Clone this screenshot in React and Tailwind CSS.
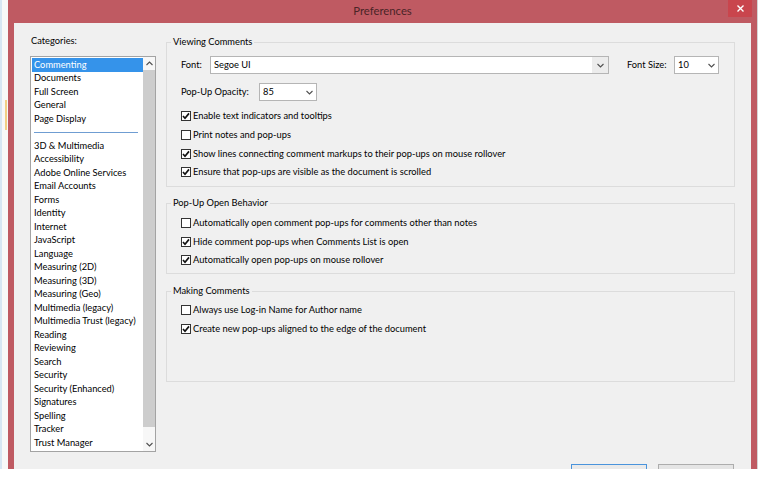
import React from "react";

const topCategories = ["Commenting", "Documents", "Full Screen", "General", "Page Display"];
const moreCategories = [
  "3D & Multimedia",
  "Accessibility",
  "Adobe Online Services",
  "Email Accounts",
  "Forms",
  "Identity",
  "Internet",
  "JavaScript",
  "Language",
  "Measuring (2D)",
  "Measuring (3D)",
  "Measuring (Geo)",
  "Multimedia (legacy)",
  "Multimedia Trust (legacy)",
  "Reading",
  "Reviewing",
  "Search",
  "Security",
  "Security (Enhanced)",
  "Signatures",
  "Spelling",
  "Tracker",
  "Trust Manager",
  "Updater",
];

const Chevron = ({ up }) => (
  <svg width="7" height="5" viewBox="0 0 7 5" className="shrink-0">
    <polyline
      points={up ? "0.5,4 3.5,1 6.5,4" : "0.5,1 3.5,4 6.5,1"}
      fill="none"
      stroke="#505050"
      strokeWidth="1.1"
    />
  </svg>
);

const CheckBox = ({ checked }) => (
  <svg width="10" height="10" viewBox="0 0 10 10" className="shrink-0">
    <rect x="0.5" y="0.5" width="9" height="9" fill="#fff" stroke="#333" />
    {checked && (
      <path d="M2 5 L4 7.2 L8 2.4" fill="none" stroke="#111" strokeWidth="1.7" />
    )}
  </svg>
);

const CheckRow = ({ checked, label }) => (
  <div className="h-[18.7px] flex items-center gap-[2px] pl-[14px]">
    <CheckBox checked={checked} />
    <span className="whitespace-nowrap">{label}</span>
  </div>
);

const Select = ({ value, width, shaded }) => (
  <div
    className={`h-[18px] flex items-center bg-white border border-[#b5b5b5] ${width}`}
  >
    <span className="flex-1 pl-[3px]">{value}</span>
    {shaded ? (
      <div className="w-[16px] h-full bg-[#ececec] flex items-center justify-center">
        <Chevron />
      </div>
    ) : (
      <div className="w-[14px] flex items-center justify-center">
        <Chevron />
      </div>
    )}
  </div>
);

const Group = ({ title, height, className = "", children }) => (
  <fieldset className={`shrink-0 border border-[#dcdcdc] ${height} ${className}`}>
    <legend className="ml-[4px] px-[2px] h-[14px] leading-[14px]">{title}</legend>
    {children}
  </fieldset>
);

const App = () => {
  return (
    <div className="w-[772px] h-[478px] bg-white flex overflow-hidden text-black font-[Lato,sans-serif] text-[9.3px]">
      {/* desktop behind the dialog */}
      <div className="w-[8px] h-[469px] flex bg-[#f8f8f8]">
        <div className="w-[2px] bg-[#d7e6f3]" />
        <div className="flex-1 flex flex-col">
          <div className="h-[100px]" />
          <div className="ml-[3px] w-[2px] h-[30px] bg-[#f1cf86]" />
        </div>
      </div>

      {/* dialog window */}
      <div className="w-[749px] h-[469px] bg-[#bf5a62] flex flex-col">
        <div className="h-[23px] shrink-0 grid grid-cols-[1fr_auto_1fr] items-start">
          <div />
          <div className="h-[23px] flex items-center text-[11.3px] text-[#4a2427]">
            Preferences
          </div>
          <div className="flex justify-end pr-[5px]">
            <div className="w-[24px] h-[17px] bg-[#c9454d] flex items-center justify-center">
              <svg width="7" height="7" viewBox="0 0 7 7">
                <path d="M0.5 0.5 L6.5 6.5 M6.5 0.5 L0.5 6.5" stroke="#fff" strokeWidth="1.4" />
              </svg>
            </div>
          </div>
        </div>

        <div className="mx-[6px] flex-1 min-h-0 bg-[#f0f0f0] flex overflow-hidden pl-[16px] pr-[16px]">
          {/* categories */}
          <div className="w-[126px] shrink-0 pt-[11px] flex flex-col">
            <div className="h-[14px] shrink-0 leading-[14px] ml-[1px]">Categories:</div>
            <div className="mt-[8px] shrink-0 h-[396px] border border-[#a3a3a3] bg-white flex">
              <div className="w-[112px] pt-[1px] overflow-hidden">
                {topCategories.map((c, i) => (
                  <div
                    key={c}
                    className={`h-[13.5px] flex items-center ml-[1px] pl-[2px] whitespace-nowrap ${
                      i === 0 ? "bg-[#3593ea] text-white" : ""
                    }`}
                  >
                    {c}
                  </div>
                ))}
                <div className="h-[13.5px] flex items-center">
                  <div className="ml-[3px] w-[104px] h-[1px] bg-[#6f9dd2]" />
                </div>
                {moreCategories.map((c) => (
                  <div key={c} className="h-[13.5px] flex items-center ml-[1px] pl-[2px] whitespace-nowrap">
                    {c}
                  </div>
                ))}
              </div>
              <div className="w-[12px] flex flex-col bg-[#f7f7f7]">
                <div className="h-[13px] flex items-center justify-center">
                  <Chevron up />
                </div>
                <div className="h-[357px] bg-[#cdcdcd]" />
                <div className="flex-1" />
                <div className="h-[13px] flex items-center justify-center">
                  <Chevron />
                </div>
              </div>
            </div>
          </div>

          {/* settings */}
          <div className="ml-[10px] w-[569px] shrink-0 pt-[12px] flex flex-col">
            <Group title="Viewing Comments" height="h-[152px]">
              <div className="mt-[7px] h-[18px] flex items-center pl-[14px]">
                <span className="w-[29px]">Font:</span>
                <Select value="Segoe UI" width="w-[399px]" shaded />
                <span className="ml-[18px] w-[47px]">Font Size:</span>
                <Select value="10" width="w-[45px]" />
              </div>
              <div className="mt-[9px] h-[18px] flex items-center pl-[14px]">
                <span className="w-[78px]">Pop-Up Opacity:</span>
                <Select value="85" width="w-[58px]" />
              </div>
              <div className="mt-[6px]">
                <CheckRow checked label="Enable text indicators and tooltips" />
                <CheckRow label="Print notes and pop-ups" />
                <CheckRow checked label="Show lines connecting comment markups to their pop-ups on mouse rollover" />
                <CheckRow checked label="Ensure that pop-ups are visible as the document is scrolled" />
              </div>
            </Group>

            <Group title="Pop-Up Open Behavior" height="h-[78px]" className="mt-[9px]">
              <div className="pt-[3.5px]">
                <CheckRow label="Automatically open comment pop-ups for comments other than notes" />
                <CheckRow checked label="Hide comment pop-ups when Comments List is open" />
                <CheckRow checked label="Automatically open pop-ups on mouse rollover" />
              </div>
            </Group>

            <Group title="Making Comments" height="h-[98px]" className="mt-[10px]">
              <div className="pt-[2.5px]">
                <CheckRow label="Always use Log-in Name for Author name" />
                <CheckRow checked label="Create new pop-ups aligned to the edge of the document" />
              </div>
            </Group>

            {/* dialog buttons, only their top edge is in view */}
            <div className="mt-[82px] shrink-0 flex justify-end gap-[11px] pr-[1px]">
              <button className="w-[76px] h-[23px] border border-[#4a94dc] bg-[#eaeaea]" />
              <button className="w-[76px] h-[23px] border border-[#adadad] bg-[#e5e5e5]" />
            </div>
          </div>
        </div>
      </div>

      {/* desktop behind, right side */}
      <div className="flex-1 h-[469px] flex">
        <div className="w-[1px] bg-[#d4d4d4]" />
        <div className="flex-1 bg-white" />
      </div>
    </div>
  );
};

export default App;
